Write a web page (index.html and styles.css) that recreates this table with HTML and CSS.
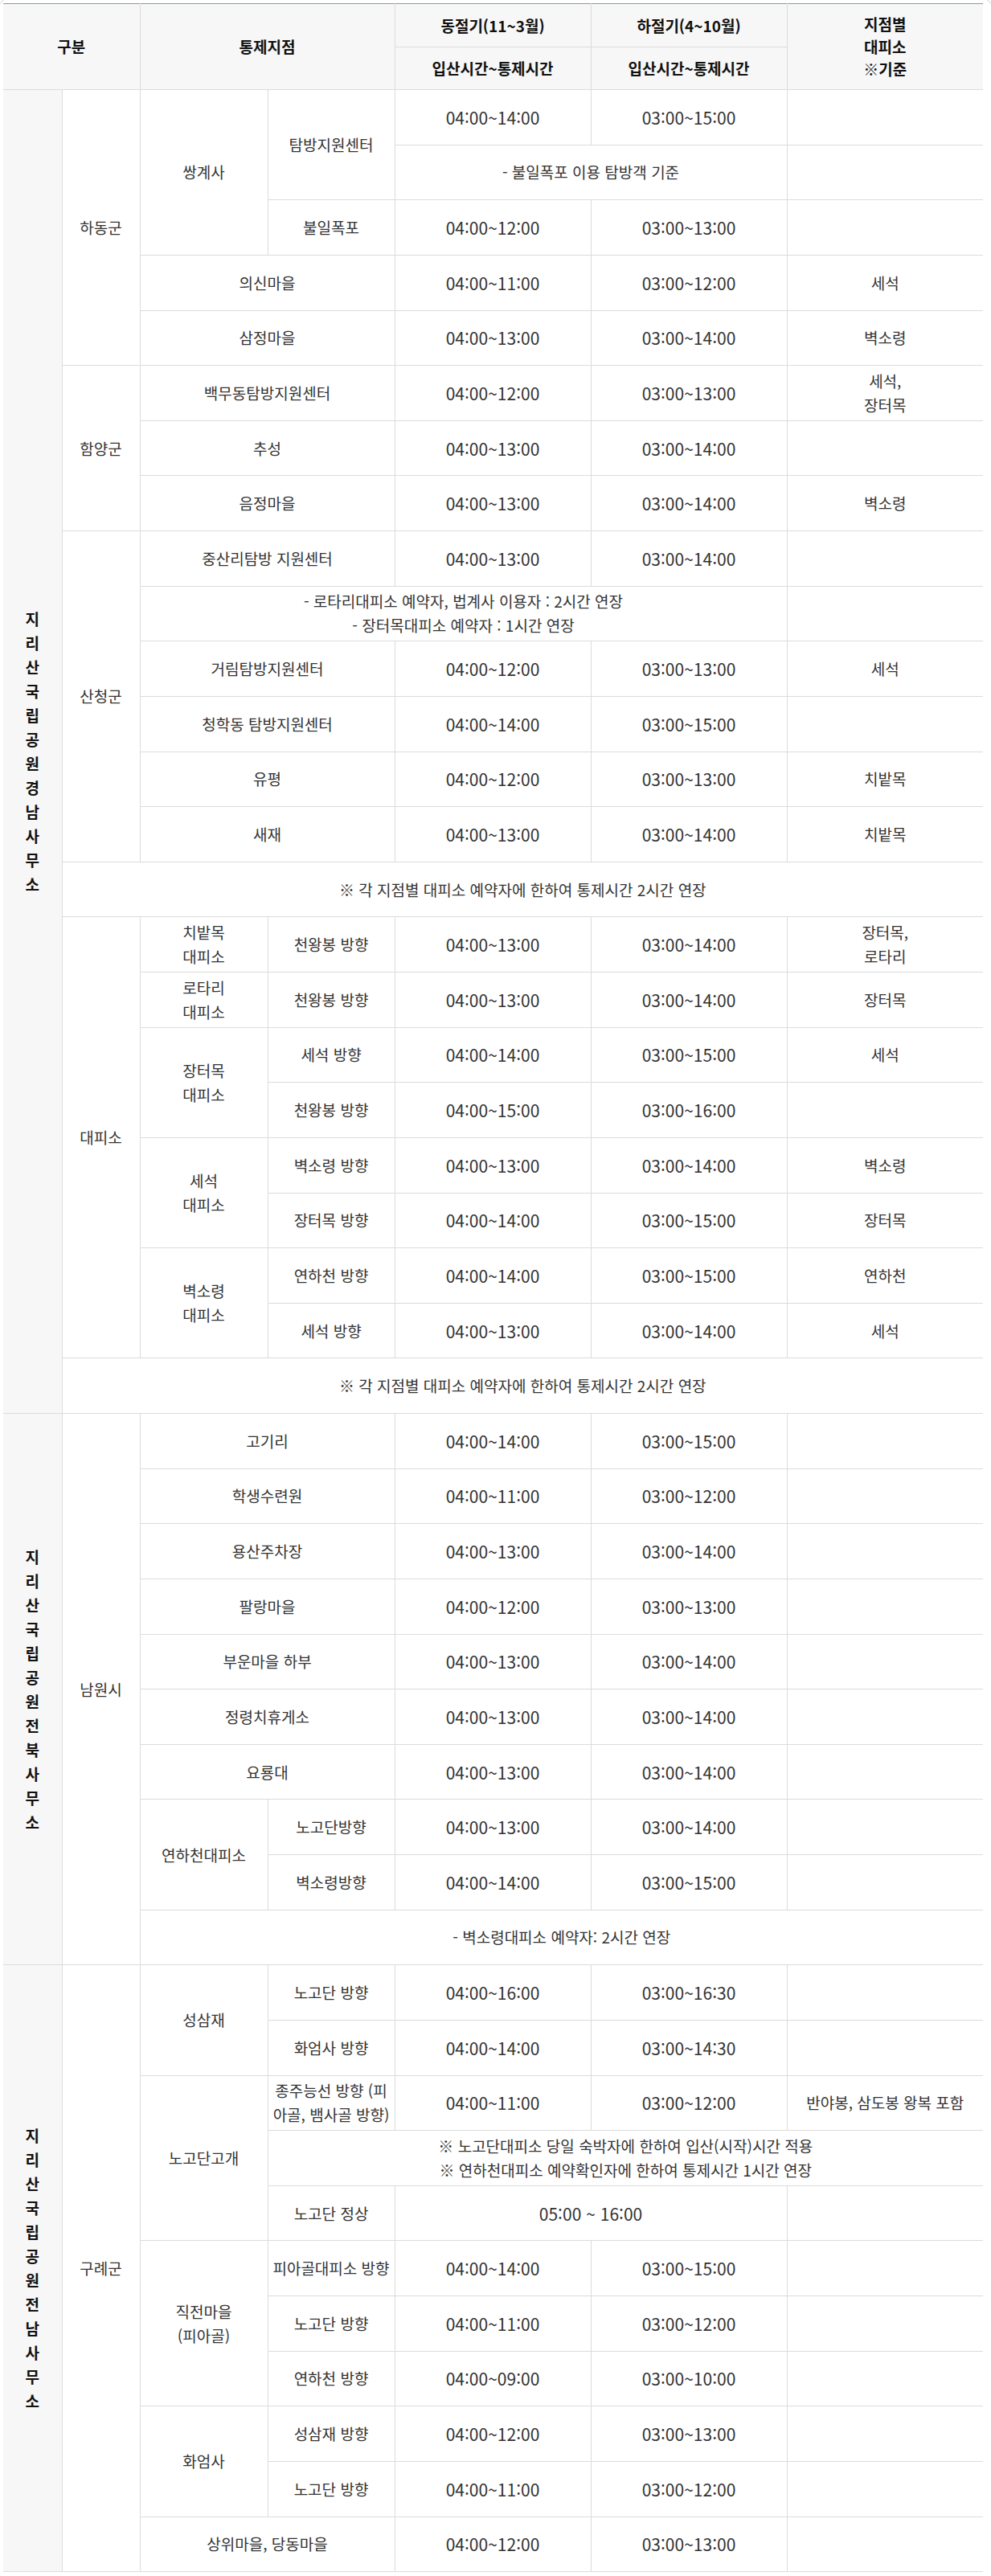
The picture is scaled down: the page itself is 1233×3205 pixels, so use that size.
FILE: index.html
```html
<!DOCTYPE html>
<html lang="ko">
<head>
<meta charset="utf-8">
<title>지리산국립공원 통제시간</title>
<link rel="stylesheet" href="styles.css">
</head>
<body>
<div class="frame">
<table class="tbl">
<colgroup>
<col class="c-office"><col class="c-area"><col class="c-sub1"><col class="c-sub2"><col class="c-time"><col class="c-time"><col class="c-time">
</colgroup>
<thead>
<tr class="hr1"><th colspan="2" rowspan="2">구분</th><th colspan="2" rowspan="2">통제지점</th><th>동절기(11~3월)</th><th>하절기(4~10월)</th><th rowspan="2">지점별<br>대피소<br>※기준</th></tr>
<tr class="hr2"><th>입산시간~통제시간</th><th>입산시간~통제시간</th></tr>
</thead>
<tbody>
<tr><td class="office" rowspan="24"><span class="vt">지리산국립공원경남사무소</span></td><td rowspan="5">하동군</td><td rowspan="3">쌍계사</td><td rowspan="2">탐방지원센터</td><td class="t">04:00~14:00</td><td class="t">03:00~15:00</td><td></td></tr>
<tr><td colspan="2">- 불일폭포 이용 탐방객 기준</td><td></td></tr>
<tr><td>불일폭포</td><td class="t">04:00~12:00</td><td class="t">03:00~13:00</td><td></td></tr>
<tr><td colspan="2">의신마을</td><td class="t">04:00~11:00</td><td class="t">03:00~12:00</td><td>세석</td></tr>
<tr><td colspan="2">삼정마을</td><td class="t">04:00~13:00</td><td class="t">03:00~14:00</td><td>벽소령</td></tr>
<tr><td rowspan="3">함양군</td><td colspan="2">백무동탐방지원센터</td><td class="t">04:00~12:00</td><td class="t">03:00~13:00</td><td>세석,<br>장터목</td></tr>
<tr><td colspan="2">추성</td><td class="t">04:00~13:00</td><td class="t">03:00~14:00</td><td></td></tr>
<tr><td colspan="2">음정마을</td><td class="t">04:00~13:00</td><td class="t">03:00~14:00</td><td>벽소령</td></tr>
<tr><td rowspan="6">산청군</td><td colspan="2">중산리탐방 지원센터</td><td class="t">04:00~13:00</td><td class="t">03:00~14:00</td><td></td></tr>
<tr><td colspan="4">- 로타리대피소 예약자, 법계사 이용자 : 2시간 연장<br>- 장터목대피소 예약자 : 1시간 연장</td><td></td></tr>
<tr><td colspan="2">거림탐방지원센터</td><td class="t">04:00~12:00</td><td class="t">03:00~13:00</td><td>세석</td></tr>
<tr><td colspan="2">청학동 탐방지원센터</td><td class="t">04:00~14:00</td><td class="t">03:00~15:00</td><td></td></tr>
<tr><td colspan="2">유평</td><td class="t">04:00~12:00</td><td class="t">03:00~13:00</td><td>치밭목</td></tr>
<tr><td colspan="2">새재</td><td class="t">04:00~13:00</td><td class="t">03:00~14:00</td><td>치밭목</td></tr>
<tr><td colspan="6">※ 각 지점별 대피소 예약자에 한하여 통제시간 2시간 연장</td></tr>
<tr><td rowspan="8">대피소</td><td>치밭목<br>대피소</td><td>천왕봉 방향</td><td class="t">04:00~13:00</td><td class="t">03:00~14:00</td><td>장터목,<br>로타리</td></tr>
<tr><td>로타리<br>대피소</td><td>천왕봉 방향</td><td class="t">04:00~13:00</td><td class="t">03:00~14:00</td><td>장터목</td></tr>
<tr><td rowspan="2">장터목<br>대피소</td><td>세석 방향</td><td class="t">04:00~14:00</td><td class="t">03:00~15:00</td><td>세석</td></tr>
<tr><td>천왕봉 방향</td><td class="t">04:00~15:00</td><td class="t">03:00~16:00</td><td></td></tr>
<tr><td rowspan="2">세석<br>대피소</td><td>벽소령 방향</td><td class="t">04:00~13:00</td><td class="t">03:00~14:00</td><td>벽소령</td></tr>
<tr><td>장터목 방향</td><td class="t">04:00~14:00</td><td class="t">03:00~15:00</td><td>장터목</td></tr>
<tr><td rowspan="2">벽소령<br>대피소</td><td>연하천 방향</td><td class="t">04:00~14:00</td><td class="t">03:00~15:00</td><td>연하천</td></tr>
<tr><td>세석 방향</td><td class="t">04:00~13:00</td><td class="t">03:00~14:00</td><td>세석</td></tr>
<tr><td colspan="6">※ 각 지점별 대피소 예약자에 한하여 통제시간 2시간 연장</td></tr>

<tr><td class="office" rowspan="10"><span class="vt">지리산국립공원전북사무소</span></td><td rowspan="10">남원시</td><td colspan="2">고기리</td><td class="t">04:00~14:00</td><td class="t">03:00~15:00</td><td></td></tr>
<tr><td colspan="2">학생수련원</td><td class="t">04:00~11:00</td><td class="t">03:00~12:00</td><td></td></tr>
<tr><td colspan="2">용산주차장</td><td class="t">04:00~13:00</td><td class="t">03:00~14:00</td><td></td></tr>
<tr><td colspan="2">팔랑마을</td><td class="t">04:00~12:00</td><td class="t">03:00~13:00</td><td></td></tr>
<tr><td colspan="2">부운마을 하부</td><td class="t">04:00~13:00</td><td class="t">03:00~14:00</td><td></td></tr>
<tr><td colspan="2">정령치휴게소</td><td class="t">04:00~13:00</td><td class="t">03:00~14:00</td><td></td></tr>
<tr><td colspan="2">요룡대</td><td class="t">04:00~13:00</td><td class="t">03:00~14:00</td><td></td></tr>
<tr><td rowspan="2">연하천대피소</td><td>노고단방향</td><td class="t">04:00~13:00</td><td class="t">03:00~14:00</td><td></td></tr>
<tr><td>벽소령방향</td><td class="t">04:00~14:00</td><td class="t">03:00~15:00</td><td></td></tr>
<tr><td colspan="5">- 벽소령대피소 예약자: 2시간 연장</td></tr>

<tr><td class="office" rowspan="11"><span class="vt">지리산국립공원전남사무소</span></td><td rowspan="11">구례군</td><td rowspan="2">성삼재</td><td>노고단 방향</td><td class="t">04:00~16:00</td><td class="t">03:00~16:30</td><td></td></tr>
<tr><td>화엄사 방향</td><td class="t">04:00~14:00</td><td class="t">03:00~14:30</td><td></td></tr>
<tr><td rowspan="3">노고단고개</td><td class="nw">종주능선 방향 (피<br>아골, 뱀사골 방향)</td><td class="t">04:00~11:00</td><td class="t">03:00~12:00</td><td>반야봉, 삼도봉 왕복 포함</td></tr>
<tr><td colspan="4">※ 노고단대피소 당일 숙박자에 한하여 입산(시작)시간 적용<br>※ 연하천대피소 예약확인자에 한하여 통제시간 1시간 연장</td></tr>
<tr><td>노고단 정상</td><td colspan="2" class="t">05:00 ~ 16:00</td><td></td></tr>
<tr><td rowspan="3">직전마을<br>(피아골)</td><td class="nw">피아골대피소 방향</td><td class="t">04:00~14:00</td><td class="t">03:00~15:00</td><td></td></tr>
<tr><td>노고단 방향</td><td class="t">04:00~11:00</td><td class="t">03:00~12:00</td><td></td></tr>
<tr><td>연하천 방향</td><td class="t">04:00~09:00</td><td class="t">03:00~10:00</td><td></td></tr>
<tr><td rowspan="2">화엄사</td><td>성삼재 방향</td><td class="t">04:00~12:00</td><td class="t">03:00~13:00</td><td></td></tr>
<tr><td>노고단 방향</td><td class="t">04:00~11:00</td><td class="t">03:00~12:00</td><td></td></tr>
<tr><td colspan="2">상위마을, 당동마을</td><td class="t">04:00~12:00</td><td class="t">03:00~13:00</td><td></td></tr>
</tbody>
</table>
</div>
</body>
</html>
```
FILE: styles.css
```css
html, body {
  margin: 0;
  padding: 0;
  background: #fff;
  overflow-x: hidden;
}
body {
  font-family: "Noto Sans CJK KR", "Noto Sans", sans-serif;
  color: #333;
}
.frame {
  margin: -2px -2px 0 -2px;
  border: 1px solid #d4d4d4;
  border-radius: 12px;
  padding: 5px 11px 20px 5px;
}
.tbl {
  width: 1219px;
  table-layout: fixed;
  border-collapse: collapse;
  border-left-style: hidden;
  border-right-style: hidden;
}
.c-office { width: 73px; }
.c-area { width: 97px; }
.c-sub1 { width: 159px; }
.c-sub2 { width: 158px; }
.c-time { width: 244px; }
.tbl th,
.tbl td {
  border: 1px solid #dcdcdc;
  text-align: center;
  vertical-align: middle;
  padding: 0 2px;
  font-size: 19px;
  line-height: 30px;
  font-weight: normal;
  color: #333;
}
.tbl th {
  background: #f7f7f7;
  font-weight: bold;
  color: #111;
  line-height: 28px;
}
.tbl .hr1 th {
  border-top: 1px solid #62b966;
}
.hr1 { height: 54px; }
.hr2 { height: 53px; }
.tbl tbody tr { height: 68.64px; }
.tbl .office {
  background: #f7f7f7;
  font-weight: bold;
  color: #111;
}
.vt {
  display: inline-block;
  width: 1em;
  line-height: 30px;
  word-break: break-all;
}
.tbl .t { font-size: 21px; }
.tbl .nw { white-space: nowrap; padding: 0; }
```
